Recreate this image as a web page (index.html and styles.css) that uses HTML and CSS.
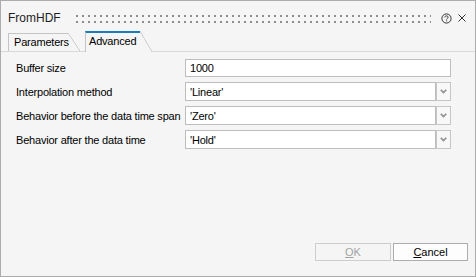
FILE: index.html
```html
<!DOCTYPE html>
<html>
<head>
<meta charset="utf-8">
<link rel="stylesheet" href="styles.css">
</head>
<body>
<div class="window">
  <div class="titlebar">
    <span class="title">FromHDF</span>
    <div class="grip"></div>
    <svg class="help" viewBox="0 0 11 11"><circle cx="5.5" cy="5.5" r="4.6" fill="none" stroke="#333" stroke-width="1"/><path d="M3.9 4.4 C3.9 3.3 4.6 2.9 5.5 2.9 C6.4 2.9 7.1 3.4 7.1 4.3 C7.1 5.3 5.6 5.3 5.6 6.5" fill="none" stroke="#333" stroke-width="1"/><rect x="5.1" y="7.4" width="1" height="1" fill="#333"/></svg>
    <svg class="close" viewBox="0 0 8 8"><path d="M0.5 0.5 L7.5 7.5 M7.5 0.5 L0.5 7.5" stroke="#333" stroke-width="1"/></svg>
  </div>
  <div class="tabs">
    <div class="tab">Parameters</div>
    <div class="tab active">Advanced</div>
  </div>
  <div class="form">
    <div class="row first">
      <span class="label">Buffer size</span>
      <div class="field wide">1000</div>
    </div>
    <div class="row">
      <span class="label">Interpolation method</span>
      <div class="combo"><div class="field">'Linear'</div><div class="drop"><svg viewBox="0 0 7 5"><path d="M0.8 0.8 L3.5 3.6 L6.2 0.8" fill="none" stroke="#8c8c8c" stroke-width="1.6"/></svg></div></div>
    </div>
    <div class="row">
      <span class="label">Behavior before the data time span</span>
      <div class="combo"><div class="field">'Zero'</div><div class="drop"><svg viewBox="0 0 7 5"><path d="M0.8 0.8 L3.5 3.6 L6.2 0.8" fill="none" stroke="#8c8c8c" stroke-width="1.6"/></svg></div></div>
    </div>
    <div class="row">
      <span class="label">Behavior after the data time</span>
      <div class="combo"><div class="field">'Hold'</div><div class="drop"><svg viewBox="0 0 7 5"><path d="M0.8 0.8 L3.5 3.6 L6.2 0.8" fill="none" stroke="#8c8c8c" stroke-width="1.6"/></svg></div></div>
    </div>
  </div>
  <div class="spacer"></div>
  <div class="buttons">
    <button class="btn ok" disabled><u>O</u>K</button>
    <button class="btn cancel"><u>C</u>ancel</button>
  </div>
</div>
</body>
</html>
```

FILE: styles.css
```css
body {
  margin: 0;
  font-family: "Liberation Sans", Arial, sans-serif;
}

.window {
  width: 476px;
  height: 277px;
  box-sizing: border-box;
  border: 1px solid #acacac;
  background: #f5f5f5;
  display: flex;
  flex-direction: column;
  color: #000;
  font-size: 11px;
  letter-spacing: -0.2px;
}

.titlebar {
  height: 30px;
  box-sizing: border-box;
  padding: 4px 9px 0 7px;
  display: flex;
  align-items: center;
  flex-shrink: 0;
}

.title {
  font-size: 12px;
  letter-spacing: 0;
  color: #1f1f1f;
}

.grip {
  flex: 1;
  height: 8px;
  margin: 2px 0 0 15px;
  display: flex;
  flex-direction: column;
  justify-content: space-between;
}

.grip::before,
.grip::after {
  content: "";
  height: 2px;
  background: repeating-linear-gradient(to right, #8e8e8e 0 2px, transparent 2px 6px);
}

.help {
  width: 11px;
  height: 11px;
  margin-left: 10px;
}

.close {
  width: 8px;
  height: 8px;
  margin-left: 6px;
}

.tabs {
  height: 20px;
  display: flex;
  align-items: flex-end;
  padding-left: 7px;
  border-bottom: 1px solid #d8d8d8;
  flex-shrink: 0;
}

.tab {
  position: relative;
  box-sizing: border-box;
  width: 60px;
  height: 18px;
  border-left: 1px solid #c4c4c4;
  border-top: 1px solid #c4c4c4;
  padding-left: 5px;
  line-height: 17px;
  background: #f5f5f5;
  white-space: nowrap;
}

.tab::after {
  content: "";
  position: absolute;
  top: -1px;
  bottom: 0;
  right: -12px;
  width: 12px;
  background: linear-gradient(to top right, transparent calc(50% - 0.7px), #c4c4c4 50%, transparent calc(50% + 0.7px));
}

.tab.active {
  width: 55px;
  height: 21px;
  margin-bottom: -1px;
  margin-left: 17px;
  padding-left: 3px;
  border-top: 2px solid #1a7db8;
}

.tab.active::after {
  top: -2px;
  background: linear-gradient(to top right, #f5f5f5 calc(50% - 0.7px), #c4c4c4 50%, transparent calc(50% + 0.7px));
}

.form {
  padding: 7px 0 0 15px;
  display: flex;
  flex-direction: column;
  gap: 5px;
}

.row {
  display: flex;
  align-items: center;
  height: 19px;
}

.row.first {
  height: 18px;
}

.label {
  width: 169px;
  flex-shrink: 0;
  white-space: nowrap;
}

.field {
  box-sizing: border-box;
  height: 100%;
  width: 251px;
  border: 1px solid #bdbdbd;
  background: #fff;
  padding-left: 4px;
  display: flex;
  align-items: center;
}

.field.wide {
  width: 266px;
}

.combo {
  display: flex;
  height: 100%;
}

.drop {
  box-sizing: border-box;
  width: 15px;
  height: 100%;
  border: 1px solid #c6c6c6;
  background: #f8f8f8;
  display: flex;
  align-items: center;
  justify-content: center;
}

.drop svg {
  width: 7px;
  height: 5px;
}

.spacer {
  flex: 1;
}

.buttons {
  display: flex;
  justify-content: flex-end;
  gap: 2px;
  padding: 0 7px 15px 0;
}

.btn {
  box-sizing: border-box;
  height: 18px;
  padding: 0;
  font: inherit;
  letter-spacing: 0;
  border: 1px solid #adadad;
  background: #fdfdfd;
  color: #000;
}

.btn.ok {
  width: 76px;
  border-color: #cdcdcd;
  background: #f5f5f5;
  color: #a3a3a3;
}

.btn.cancel {
  width: 75px;
}
```
